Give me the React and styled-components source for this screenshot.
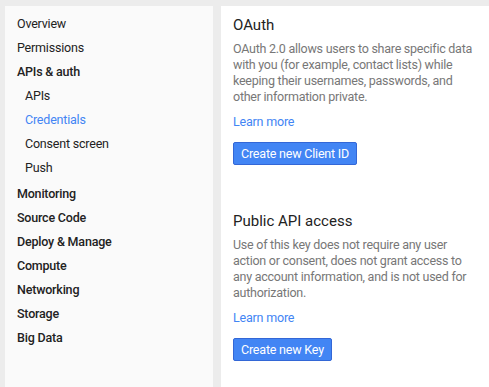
import React from 'react';
import styled, { createGlobalStyle } from 'styled-components';

const GlobalStyle = createGlobalStyle`
  html, body {
    margin: 0;
    padding: 0;
    background: #ececec;
    font-family: Roboto, "Noto Sans", Arial, sans-serif;
  }
`;

const Page = styled.div`
  display: flex;
  gap: 8px;
  padding: 6px 0 0 5px;
  height: 381px;
  overflow: hidden;
`;

const Sidebar = styled.nav`
  width: 208px;
  flex-shrink: 0;
  background: #fafafa;
  padding-top: 6px;
`;

const NavItem = styled.div`
  height: 24px;
  line-height: 24px;
  font-size: 12.5px;
  letter-spacing: -0.2px;
  padding-left: ${(p) => (p.$sub ? 20 : 12)}px;
  color: ${(p) => (p.$active ? '#4285f4' : '#222')};
  font-weight: ${(p) => (p.$bold ? 500 : 400)};
  margin-top: ${(p) => (p.$gap ? 2 : 0)}px;
`;

const Content = styled.main`
  flex: 1;
  background: #fff;
  padding: 9px 10px 0 12px;
`;

const Section = styled.section`
  margin-bottom: 46px;
`;

const Title = styled.h2`
  margin: 0 0 6px;
  font-size: 15px;
  font-weight: 400;
  color: #222;
  line-height: 20px;
`;

const Text = styled.p`
  margin: 0 0 9px;
  font-size: 12.5px;
  letter-spacing: -0.25px;
  line-height: 16px;
  color: #777;
`;

const Link = styled.a`
  display: block;
  font-size: 12.5px;
  letter-spacing: -0.2px;
  line-height: 16px;
  color: #4285f4;
  text-decoration: none;
  margin-bottom: 12px;
`;

const Button = styled.button`
  height: 23px;
  padding: 0 7px;
  font-family: inherit;
  font-size: 12.5px;
  letter-spacing: -0.2px;
  color: #fff;
  background: #4285f4;
  border: 1px solid #3367d6;
  border-radius: 2px;
`;

const nav = [
  { label: 'Overview' },
  { label: 'Permissions' },
  { label: 'APIs & auth', bold: true },
  { label: 'APIs', sub: true },
  { label: 'Credentials', sub: true, active: true },
  { label: 'Consent screen', sub: true },
  { label: 'Push', sub: true },
  { label: 'Monitoring', bold: true, gap: true },
  { label: 'Source Code', bold: true },
  { label: 'Deploy & Manage', bold: true },
  { label: 'Compute', bold: true },
  { label: 'Networking', bold: true },
  { label: 'Storage', bold: true },
  { label: 'Big Data', bold: true },
];

export default function App() {
  return (
    <>
      <GlobalStyle />
      <Page>
        <Sidebar>
          {nav.map((n) => (
            <NavItem key={n.label} $sub={n.sub} $bold={n.bold} $active={n.active} $gap={n.gap}>
              {n.label}
            </NavItem>
          ))}
        </Sidebar>
        <Content>
          <Section>
            <Title>OAuth</Title>
            <Text>
              OAuth 2.0 allows users to share specific data with you (for example, contact lists) while
              keeping their usernames, passwords, and other information private.
            </Text>
            <Link href="#">Learn more</Link>
            <Button>Create new Client ID</Button>
          </Section>
          <Section>
            <Title>Public API access</Title>
            <Text>
              Use of this key does not require any user action or consent, does not grant access to
              any account information, and is not used for authorization.
            </Text>
            <Link href="#">Learn more</Link>
            <Button>Create new Key</Button>
          </Section>
        </Content>
      </Page>
    </>
  );
}
